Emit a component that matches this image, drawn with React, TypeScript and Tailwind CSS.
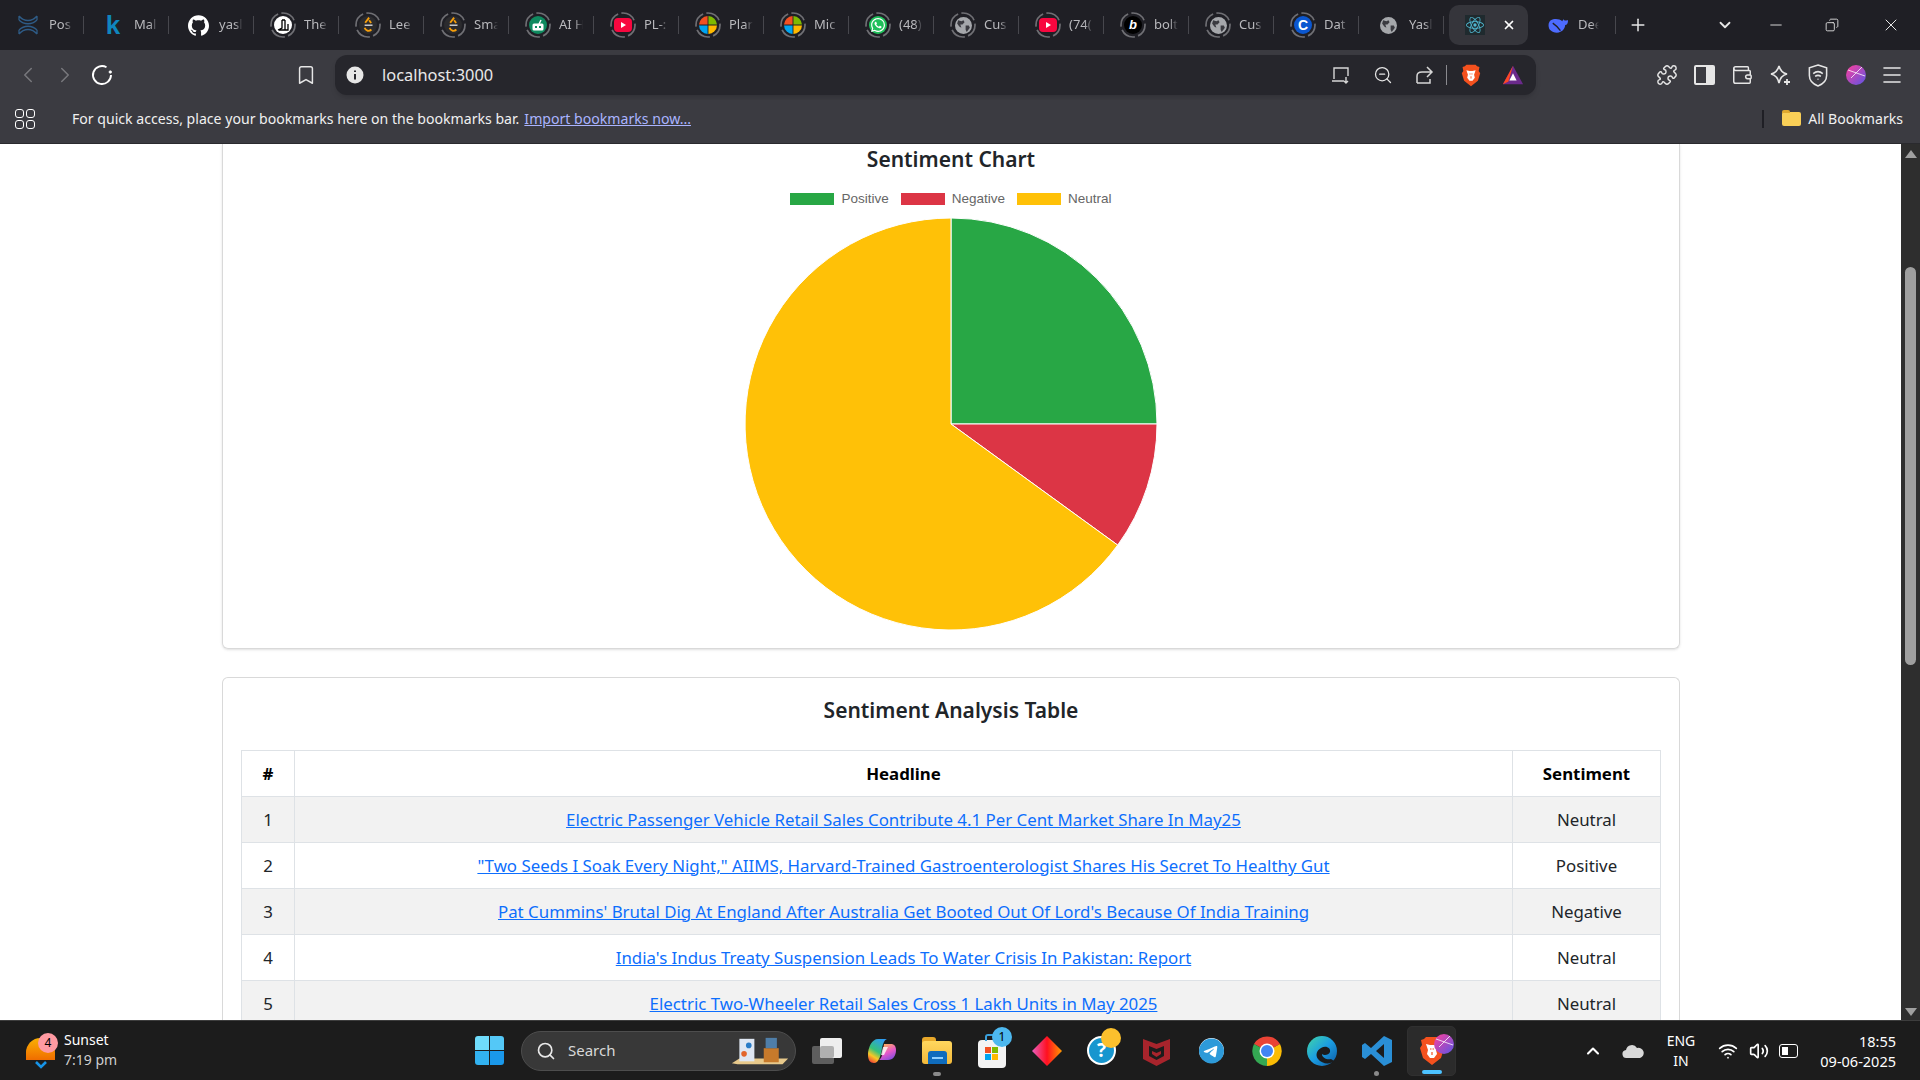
import React from 'react';
import { ChevronDown, ChevronLeft, ChevronRight, Menu, Minus, Plus, Search, X, Bookmark, ZoomOut, Puzzle, Wallet, Wifi, Volume2, ChevronUp, Copy } from 'lucide-react';
import { SiGithub, SiWhatsapp, SiReact, SiTelegram } from 'react-icons/si';

const font = "font-['Noto_Sans',sans-serif]";

const headlines = [
  { id: 1, title: 'Electric Passenger Vehicle Retail Sales Contribute 4.1 Per Cent Market Share In May25', sentiment: 'Neutral' },
  { id: 2, title: '"Two Seeds I Soak Every Night," AIIMS, Harvard-Trained Gastroenterologist Shares His Secret To Healthy Gut', sentiment: 'Positive' },
  { id: 3, title: "Pat Cummins' Brutal Dig At England After Australia Get Booted Out Of Lord's Because Of India Training", sentiment: 'Negative' },
  { id: 4, title: "India's Indus Treaty Suspension Leads To Water Crisis In Pakistan: Report", sentiment: 'Neutral' },
  { id: 5, title: 'Electric Two-Wheeler Retail Sales Cross 1 Lakh Units in May 2025', sentiment: 'Neutral' },
];

// dashed ring that Brave draws round tabs in a group
function Ring({ children }: { children: React.ReactNode }) {
  return (
    <div className="relative flex h-[26px] w-[26px] items-center justify-center">
      <svg viewBox="0 0 26 26" className="absolute inset-0 h-full w-full">
        <circle cx="13" cy="13" r="12" fill="none" stroke="#6f6f74" strokeWidth="1.7" strokeDasharray="15.5 3.35" strokeDashoffset="2" />
      </svg>
      {children}
    </div>
  );
}

const Globe = () => (
  <svg viewBox="0 0 16 16" className="h-[17px] w-[17px]">
    <circle cx="8" cy="8" r="8" fill="#a5a7ab" />
    <path d="M3 3l3 1 2-1 1 2-2 2-2 0 1 3-2-1-2-3zM10 8l3 0 1 2-3 4-1-2z" fill="#3a3a40" />
  </svg>
);

const MsCircle = () => (
  <svg viewBox="0 0 16 16" className="h-[18px] w-[18px]">
    <path d="M7.6 7.6V0A8 8 0 0 0 0 7.6z" fill="#f25022" />
    <path d="M8.4 7.6H16A8 8 0 0 0 8.4 0z" fill="#7fba00" />
    <path d="M7.6 8.4H0A8 8 0 0 0 7.6 16z" fill="#00a4ef" />
    <path d="M8.4 8.4V16A8 8 0 0 0 16 8.4z" fill="#ffb900" />
  </svg>
);

const Yt = () => (
  <div className="flex h-[14px] w-[18px] items-center justify-center rounded-[4px] bg-[#f8073f]">
    <div className="h-0 w-0 border-y-[3px] border-l-[5px] border-y-transparent border-l-white" />
  </div>
);

const Dial = () => (
  <svg viewBox="0 0 16 16" className="h-[18px] w-[18px]">
    <circle cx="8" cy="8" r="8" fill="#2b2b2e" />
    <path d="M9 1.5L5.5 6M10.8 6.2L9 3.8" fill="none" stroke="#f59e0b" strokeWidth="1.7" />
    <path d="M5 10.5c1 3 4 3.5 6 1.5" fill="none" stroke="#f59e0b" strokeWidth="1.7" />
    <path d="M5 8.2h7" stroke="#d0d0d0" strokeWidth="1.3" />
  </svg>
);

const Avatar = ({ className }: { className: string }) => (
  <svg viewBox="0 0 20 20" className={className}>
    <defs>
      <linearGradient id="avatarGrad" x1="0" y1="0" x2="1" y2="1">
        <stop offset="0" stopColor="#ff3f9b" />
        <stop offset="1" stopColor="#5a55e6" />
      </linearGradient>
    </defs>
    <circle cx="10" cy="10" r="10" fill="url(#avatarGrad)" />
    <path d="M2 5l17 6M16 2L5 13" stroke="#fff" strokeWidth="0.9" opacity="0.85" />
  </svg>
);

const BraveLion = ({ className }: { className: string }) => (
  <svg viewBox="0 0 24 30" className={className}>
    <path d="M6 1h12l2 2 3 1-1 5 2 3-3 10-9 7-9-7-3-10 2-3-1-5 3-1z" fill="#f4511e" />
    <path d="M6 8l4 1h4l4-1-2 6 1 4-3 4h-4l-3-4 1-4z" fill="#fff" />
    <path d="M10 13h1.5M12.5 13H14M12 16v3" stroke="#f4511e" strokeWidth="1.2" />
  </svg>
);

const tabs: { label: string; icon: React.ReactNode }[] = [
  {
    label: 'Pos',
    icon: (
      <svg viewBox="0 0 20 20" className="h-[20px] w-[20px]" fill="none" stroke="#2e5b86" strokeWidth="1.3">
        <path d="M1 1c5 6 13 6 18 0M1 19c5-6 13-6 18 0M1 5c5 5 13 5 18 0M1 15c5-5 13-5 18 0M1 1v4M19 1v4M1 15v4M19 15v4" />
      </svg>
    ),
  },
  { label: 'Mal', icon: <span className="font-['Liberation_Sans',sans-serif] text-[26px] leading-none font-bold text-[#0f86bd]">k</span> },
  { label: 'yasl', icon: <SiGithub className="h-[21px] w-[21px] text-white" /> },
  {
    label: 'The',
    icon: (
      <Ring>
        <div className="flex h-[18px] w-[18px] items-center justify-center rounded-full bg-white">
          <svg viewBox="0 0 12 12" className="h-[12px] w-[12px]" fill="none" stroke="#000" strokeWidth="1.3">
            <path d="M5 1v8L1 11M8 1v10M5 1h3M11 5v6H2" />
          </svg>
        </div>
      </Ring>
    ),
  },
  { label: 'Lee', icon: <Ring><Dial /></Ring> },
  { label: 'Sma', icon: <Ring><Dial /></Ring> },
  {
    label: 'AI H',
    icon: (
      <Ring>
        <svg viewBox="0 0 18 18" className="h-[18px] w-[18px]">
          <circle cx="9" cy="9" r="9" fill="#0f8a5f" />
          <path d="M10 8l2-4" stroke="#fff" strokeWidth="1.4" />
          <rect x="3.5" y="7.5" width="11" height="7" rx="1.5" fill="#fff" />
          <rect x="6" y="10" width="2" height="2" fill="#0f8a5f" />
          <rect x="10" y="10" width="2" height="2" fill="#0f8a5f" />
        </svg>
      </Ring>
    ),
  },
  { label: 'PL-:', icon: <Ring><Yt /></Ring> },
  { label: 'Plar', icon: <Ring><MsCircle /></Ring> },
  { label: 'Mic', icon: <Ring><MsCircle /></Ring> },
  {
    label: '(48)',
    icon: (
      <Ring>
        <div className="flex h-[18px] w-[18px] items-center justify-center rounded-full bg-[#1fc05a]">
          <SiWhatsapp className="h-[14px] w-[14px] text-white" />
        </div>
      </Ring>
    ),
  },
  { label: 'Cus', icon: <Ring><Globe /></Ring> },
  { label: '(74(', icon: <Ring><Yt /></Ring> },
  {
    label: 'bolt',
    icon: (
      <Ring>
        <div className="flex h-[18px] w-[18px] items-center justify-center rounded-full bg-black font-['Liberation_Sans',sans-serif] text-[13px] font-bold text-white italic">b</div>
      </Ring>
    ),
  },
  { label: 'Cus', icon: <Ring><Globe /></Ring> },
  {
    label: 'Dat',
    icon: (
      <Ring>
        <div className="flex h-[18px] w-[18px] items-center justify-center rounded-full bg-[#0b57d0] font-['Liberation_Sans',sans-serif] text-[14px] font-bold text-white">C</div>
      </Ring>
    ),
  },
  { label: 'Yasl', icon: <Globe /> },
];

function Tab({ label, icon }: { label: string; icon: React.ReactNode }) {
  return (
    <div className="flex h-[40px] w-[85px] shrink-0 items-center pl-[15px]">
      <div className="flex w-[26px] shrink-0 items-center justify-center">{icon}</div>
      <span className="ml-[8px] w-[24px] overflow-hidden text-[13px] whitespace-nowrap text-[#b9b9bd] [mask-image:linear-gradient(to_right,black_65%,transparent)]">{label}</span>
      <div className="ml-[10px] h-[18px] w-px bg-[#47474d]" />
    </div>
  );
}

function Toolbar() {
  return (
    <div className="flex h-[50px] items-center bg-[#3b3b41] text-[#e6e6e6]">
      <ChevronLeft className="ml-[15px] h-[26px] w-[26px] text-[#77777c]" strokeWidth={1.4} />
      <ChevronRight className="ml-[11px] h-[26px] w-[26px] text-[#77777c]" strokeWidth={1.4} />
      <svg viewBox="0 0 22 22" className="ml-[13px] h-[22px] w-[22px]" fill="none" stroke="#fff" strokeWidth="1.9">
        <path d="M15.5 3.2A9 9 0 1 0 20 11" />
        <circle cx="19.3" cy="8" r="1.3" fill="#fff" strokeWidth="0.6" />
      </svg>
      <Bookmark className="ml-[182px] h-[22px] w-[22px]" strokeWidth={1.6} />
      <div className="ml-[18px] flex h-[40px] w-[1201px] items-center rounded-[12px] bg-[#26262c] shadow-md">
        <svg viewBox="0 0 18 18" className="ml-[11px] h-[18px] w-[18px]">
          <circle cx="9" cy="9" r="8.5" fill="#e6e6e6" />
          <path d="M9 8v5.5M9 4.5v1.6" stroke="#26262c" strokeWidth="2" />
        </svg>
        <span className={`ml-[18px] text-[16.4px] text-[#e8e8e8] ${font}`}>localhost:3000</span>
        <div className="flex-1" />
        <svg viewBox="0 0 20 20" className="h-[20px] w-[20px]" fill="none" stroke="#d6d6d6" strokeWidth="1.4">
          <path d="M3 14V3h14v8M1 16h12M15 12v6m-2-2l2 2 2-2" />
        </svg>
        <ZoomOut className="ml-[22px] h-[20px] w-[20px]" strokeWidth={1.5} />
        <svg viewBox="0 0 20 20" className="ml-[22px] h-[20px] w-[20px]" fill="none" stroke="#d6d6d6" strokeWidth="1.5">
          <path d="M2 18V11c0-3 2-4 5-4h9M12 2l5 5-5 5M2 18h13v-4" />
        </svg>
        <div className="ml-[11px] h-[20px] w-px bg-[#8a8a8f]" />
        <BraveLion className="ml-[14px] h-[23px] w-[20px]" />
        <svg viewBox="0 0 24 24" className="mr-[12px] ml-[21px] h-[22px] w-[22px]">
          <path d="M12 2L1 22h22z" fill="#6b2a8c" />
          <path d="M12 2L1 22l6-3z" fill="#ff4724" />
          <path d="M12 10l-4 8h8z" fill="#fff" />
        </svg>
      </div>
      <Puzzle className="ml-[120px] h-[22px] w-[22px]" strokeWidth={1.6} />
      <div className="ml-[16px] flex h-[20px] w-[21px] overflow-hidden rounded-[2px] border-2 border-[#e6e6e6]">
        <div className="flex-1" />
        <div className="w-[7px] bg-[#e6e6e6]" />
      </div>
      <Wallet className="ml-[16px] h-[22px] w-[22px]" strokeWidth={1.6} />
      <svg viewBox="0 0 22 22" className="ml-[16px] h-[22px] w-[22px]" fill="none" stroke="#e6e6e6" strokeWidth="1.6">
        <path d="M10 2c1 4 4 7 8 8-4 1-7 4-8 9-1-5-4-8-8-9 4-1 7-4 8-8z" />
        <path d="M18 15v6M15 18h6" strokeWidth="1.8" />
      </svg>
      <svg viewBox="0 0 22 24" className="ml-[16px] h-[23px] w-[22px]" fill="none" stroke="#e6e6e6" strokeWidth="1.6">
        <path d="M11 1l9 3v8c0 5-4 9-9 11-5-2-9-6-9-11V4z" />
        <path d="M6 10c3-2.5 7-2.5 10 0M8 13c2-1.5 4-1.5 6 0M10.5 16h1" />
      </svg>
      <Avatar className="ml-[17px] h-[20px] w-[20px]" />
      <Menu className="ml-[14px] h-[24px] w-[24px]" strokeWidth={1.6} />
    </div>
  );
}

function BookmarksBar() {
  return (
    <div className={`flex h-[43px] items-center bg-[#3b3b41] pb-[5px] text-[14.1px] text-[#f0f0f0] ${font}`}>
      <div className="ml-[15px] grid h-[20px] w-[20px] grid-cols-2 gap-[2px]">
        <div className="rounded-[3px] border-[1.5px] border-white" />
        <div className="rounded-[3px] border-[1.5px] border-white" />
        <div className="rounded-[3px] border-[1.5px] border-white" />
        <div className="rounded-[3px] border-[1.5px] border-white" />
      </div>
      <span className="ml-[37px]">For quick access, place your bookmarks here on the bookmarks bar.</span>
      <span className="ml-[5px] text-[#aab4ff] underline">Import bookmarks now...</span>
      <div className="flex-1" />
      <div className="h-[18px] w-[2px] bg-[#1f1f25]" />
      <div className="relative ml-[18px] h-[14px] w-[19px] rounded-[2px] bg-[#f9cf57]">
        <div className="absolute -top-[2px] left-0 h-[3px] w-[8px] rounded-t-[2px] bg-[#e0a92e]" />
      </div>
      <span className="mr-[17px] ml-[7px]">All Bookmarks</span>
    </div>
  );
}

function Legend({ color, label }: { color: string; label: string }) {
  return (
    <div className="flex items-center gap-[7px]">
      <div className="h-[12px] w-[44px]" style={{ backgroundColor: color }} />
      <span className="font-['Liberation_Sans',sans-serif] text-[13.5px] text-[#666666]">{label}</span>
    </div>
  );
}

function ChartCard() {
  return (
    <div className="flex h-[505px] w-[1458px] shrink-0 flex-col items-center rounded-b-[6px] border border-t-0 border-[#d9d9d9] shadow-sm">
      <h4 className={`mt-[1px] text-[21px] leading-[28px] font-semibold text-[#212529] ${font}`}>Sentiment Chart</h4>
      <div className="mt-[19px] flex h-[14px] items-center gap-[12px]">
        <Legend color="#28a745" label="Positive" />
        <Legend color="#dc3545" label="Negative" />
        <Legend color="#ffc107" label="Neutral" />
      </div>
      <svg viewBox="0 0 414 414" className="mt-[11px] h-[414px] w-[414px]">
        <path d="M207 207V1A206 206 0 0 1 413 207z" fill="#28a745" stroke="#fff" />
        <path d="M207 207H413A206 206 0 0 1 373.7 328.1z" fill="#dc3545" stroke="#fff" />
        <path d="M207 207L373.7 328.1A206 206 0 1 1 207 1z" fill="#ffc107" stroke="#fff" />
      </svg>
    </div>
  );
}

function TableCard() {
  return (
    <div className="mt-[28px] w-[1458px] rounded-t-[6px] border border-b-0 border-[#d9d9d9] px-[18px]">
      <h4 className={`mt-[17px] mb-[24px] text-center text-[21px] leading-[31px] font-semibold text-[#212529] ${font}`}>Sentiment Analysis Table</h4>
      <table className={`w-[1420px] table-fixed border-collapse text-center text-[16.85px] text-[#212529] ${font}`}>
        <thead>
          <tr className="h-[46px] text-black">
            <th className="w-[53px] border border-[#dee2e6] font-bold">#</th>
            <th className="border border-[#dee2e6] font-bold">Headline</th>
            <th className="w-[148px] border border-[#dee2e6] font-bold">Sentiment</th>
          </tr>
        </thead>
        <tbody>
          {headlines.map((item) => (
            <tr key={item.id} className={item.id % 2 === 1 ? 'h-[46px] bg-[#f2f2f2]' : 'h-[46px]'}>
              <td className="border border-[#dee2e6]">{item.id}</td>
              <td className="border border-[#dee2e6]">
                <a className="text-[#0d6efd] underline">{item.title}</a>
              </td>
              <td className="border border-[#dee2e6]">{item.sentiment}</td>
            </tr>
          ))}
        </tbody>
      </table>
    </div>
  );
}

function Scrollbar() {
  return (
    <div className="flex w-[19px] shrink-0 flex-col items-center bg-[#2e2e2e]">
      <div className="mt-[6px] h-0 w-0 border-x-[6px] border-b-[8px] border-x-transparent border-b-[#a0a0a0]" />
      <div className="mt-[109px] h-[398px] w-[11px] rounded-full bg-[#9f9f9f]" />
      <div className="flex-1" />
      <div className="mb-[4px] h-0 w-0 border-x-[6px] border-t-[8px] border-x-transparent border-t-[#a0a0a0]" />
    </div>
  );
}

const Slot = ({ children, className = '' }: { children: React.ReactNode; className?: string }) => (
  <div className={`relative flex h-[50px] w-[55px] shrink-0 items-center justify-center ${className}`}>{children}</div>
);

function Taskbar() {
  return (
    <div className={`flex h-[60px] shrink-0 items-center border-t border-[#3d3d3d] bg-[#1c1c1c] text-white ${font}`}>
      <div className="relative ml-[26px] h-[32px] w-[30px]">
        <div className="absolute top-[3px] left-0 h-[22px] w-[29px] rounded-t-[15px] bg-gradient-to-b from-[#f9b002] to-[#ef6c00]" />
        <svg viewBox="0 0 12 8" className="absolute top-[26px] left-[9px] h-[8px] w-[12px]">
          <path d="M1 1l5 5 5-5" fill="none" stroke="#1793e6" strokeWidth="2.6" />
        </svg>
        <div className="absolute -top-[2px] left-[12px] flex h-[20px] w-[20px] items-center justify-center rounded-full bg-[#ff9aa2] text-[12px] text-black">4</div>
      </div>
      <div className="mb-[2px] ml-[8px] flex w-[80px] flex-col text-[14px] leading-[20px]">
        <span>Sunset</span>
        <span className="text-[#cfcfcf]">7:19 pm</span>
      </div>
      <svg viewBox="0 0 29 29" className="ml-[331px] h-[29px] w-[29px]">
        <path d="M0 3a3 3 0 0 1 3-3h11v14H0z" fill="#6fdcfb" />
        <path d="M15 0h11a3 3 0 0 1 3 3v11H15z" fill="#54c8f7" />
        <path d="M0 15h14v14H3a3 3 0 0 1-3-3z" fill="#32b2f0" />
        <path d="M15 15h14v11a3 3 0 0 1-3 3H15z" fill="#1a98ea" />
      </svg>
      <div className="ml-[17px] flex h-[40px] w-[275px] items-center overflow-hidden rounded-full border border-[#4d4d4d] bg-[#383838]">
        <Search className="ml-[14px] h-[20px] w-[20px] text-[#e8e8e8]" strokeWidth={2} />
        <span className="ml-[12px] text-[15px] text-[#d8d8d8]">Search</span>
        <div className="flex-1" />
        <svg viewBox="0 0 64 32" className="mr-[5px] h-[32px] w-[60px]">
          <path d="M2 29l8-5h46l6 0-6 6H8z" fill="#e8c98b" />
          <rect x="10" y="3" width="16" height="24" fill="#dfe7f3" />
          <rect x="36" y="13" width="16" height="15" fill="#c77a2b" />
          <rect x="38" y="2" width="12" height="11" fill="#4f7ea8" />
          <circle cx="20" cy="10" r="3" fill="#2a7cc7" />
          <circle cx="15" cy="19" r="3" fill="#e2652c" />
        </svg>
      </div>
      <Slot className="ml-[3px]">
        <div className="relative h-[26px] w-[30px]">
          <div className="absolute top-[8px] left-0 h-[18px] w-[22px] rounded-[2px] bg-[#5e5e5e]" />
          <div className="absolute top-0 left-[8px] h-[20px] w-[22px] rounded-[2px] bg-[#eeeeee]" />
          <div className="absolute top-[8px] left-[8px] h-[12px] w-[14px] rounded-[2px] bg-[#b0b0b0]" />
        </div>
      </Slot>
      <Slot>
        <svg viewBox="0 0 28 26" className="h-[26px] w-[28px]">
          <defs>
            <linearGradient id="copLeft" x1="0.7" y1="0" x2="0.2" y2="1">
              <stop offset="0" stopColor="#2d9cf0" />
              <stop offset="0.5" stopColor="#35c27a" />
              <stop offset="0.75" stopColor="#f9c825" />
              <stop offset="1" stopColor="#ef4136" />
            </linearGradient>
            <linearGradient id="copRight" x1="0.3" y1="0" x2="0.8" y2="1">
              <stop offset="0" stopColor="#ffb35c" />
              <stop offset="0.5" stopColor="#e858c8" />
              <stop offset="1" stopColor="#7a4de0" />
            </linearGradient>
          </defs>
          <path d="M16 6h7c3 0 5 2 5 6 0 6-3 10-8 10h-9c3-2 3-5 4-9z" fill="url(#copRight)" />
          <path d="M10 1h9c-3 1-4 5-5 9-1 7-3 15-8 15-4 0-6-3-6-8C0 9 4 1 10 1z" fill="url(#copLeft)" />
          <path d="M15 9h5l-4 8h-3z" fill="#fff" opacity="0.8" />
        </svg>
      </Slot>
      <Slot>
        <div className="relative h-[27px] w-[30px]">
          <div className="absolute top-0 left-0 h-[8px] w-[14px] rounded-t-[3px] bg-[#e8a82a]" />
          <div className="absolute top-[4px] left-0 h-[23px] w-[30px] rounded-[3px] bg-gradient-to-b from-[#ffd75e] to-[#f3b93a]" />
          <div className="absolute bottom-0 left-[6px] h-[13px] w-[19px] rounded-t-[3px] bg-[#0f6cbd]" />
          <div className="absolute bottom-[5px] left-[10px] h-[2px] w-[11px] bg-[#8fd0ff]" />
        </div>
        <div className="absolute bottom-0 h-[4px] w-[8px] rounded-full bg-[#8a8a8a]" />
      </Slot>
      <Slot>
        <div className="relative mt-[6px] flex h-[28px] w-[28px] items-center justify-center rounded-[4px] bg-[#f3f3f3]">
          <div className="absolute -top-[6px] left-[7px] h-[7px] w-[14px] rounded-t-[3px] border-[2px] border-b-0 border-[#3aa0dc]" />
          <div className="grid w-[13px] grid-cols-2 gap-[1px]">
            <div className="h-[6px] bg-[#f25022]" />
            <div className="h-[6px] bg-[#7fba00]" />
            <div className="h-[6px] bg-[#00a4ef]" />
            <div className="h-[6px] bg-[#ffb900]" />
          </div>
        </div>
        <div className="absolute top-[1px] left-[28px] flex h-[20px] w-[20px] items-center justify-center rounded-full bg-[#4db8ef] text-[12px] text-black">1</div>
      </Slot>
      <Slot>
        <svg viewBox="0 0 30 30" className="h-[30px] w-[30px]">
          <defs>
            <linearGradient id="dia" x1="0" y1="0" x2="1" y2="0">
              <stop offset="0" stopColor="#e95fc0" />
              <stop offset="0.5" stopColor="#ff1020" />
              <stop offset="1" stopColor="#ff9a00" />
            </linearGradient>
          </defs>
          <path d="M15 0l15 15-15 15L0 15z" fill="url(#dia)" />
        </svg>
      </Slot>
      <Slot>
        <div className="flex h-[29px] w-[29px] items-center justify-center rounded-full border-[2px] border-white bg-[#1796cf] text-[19px] font-bold text-white">?</div>
        <div className="absolute top-[2px] left-[27px] h-[20px] w-[20px] rounded-full bg-[#fbc02d]" />
      </Slot>
      <Slot>
        <svg viewBox="0 0 27 30" className="h-[30px] w-[27px]">
          <path d="M0 3l13.5 5L27 3v20l-13.5 7L0 23z" fill="#a8242c" />
          <path d="M6 10l7.5 3 7.5-3v10l-7.5 4L6 20z" fill="#1c1c1c" />
          <path d="M9 15l4.5 2 4.5-2v3l-4.5 3L9 18z" fill="#a8242c" />
        </svg>
      </Slot>
      <Slot>
        <div className="flex h-[25px] w-[25px] items-center justify-center rounded-full bg-white">
          <SiTelegram className="h-[26px] w-[26px] text-[#2d9ad9]" />
        </div>
      </Slot>
      <Slot>
        <svg viewBox="0 0 30 30" className="h-[30px] w-[30px]">
          <path d="M15 15L2 8A15 15 0 0 1 28 8z" fill="#ea4335" />
          <path d="M15 15L28 8A15 15 0 0 1 15 30z" fill="#fbbc05" />
          <path d="M15 15L15 30A15 15 0 0 1 2 8z" fill="#34a853" />
          <circle cx="15" cy="15" r="7.5" fill="#fff" />
          <circle cx="15" cy="15" r="6" fill="#4285f4" />
        </svg>
      </Slot>
      <Slot>
        <svg viewBox="0 0 30 30" className="h-[30px] w-[30px]">
          <defs>
            <linearGradient id="edge" x1="0" y1="0" x2="1" y2="1">
              <stop offset="0" stopColor="#41d6a8" />
              <stop offset="0.5" stopColor="#1b9de2" />
              <stop offset="1" stopColor="#0c59a4" />
            </linearGradient>
          </defs>
          <circle cx="15" cy="15" r="15" fill="url(#edge)" />
          <path d="M14 12c5-3 10 0 9 4-1 3-6 4-8 2 0 4 5 6 9 5l3 2c-4 4-12 3-16-2-3-4-1-9 3-11z" fill="#1c1c1c" />
        </svg>
      </Slot>
      <Slot>
        <svg viewBox="0 0 30 30" className="h-[30px] w-[30px]">
          <path d="M22 0l8 4v22l-8 4L9 18l-6 5-3-2v-12l3-2 6 5zM22 8l-8 7 8 7z" fill="#2a8fd6" />
        </svg>
        <div className="absolute bottom-0 h-[5px] w-[5px] rounded-full bg-[#8a8a8a]" />
      </Slot>
      <Slot>
        <div className="relative flex h-[50px] w-[49px] items-center justify-center rounded-[5px] border border-[#303030] bg-[#2b2b2b]">
          <BraveLion className="h-[30px] w-[24px]" />
          <Avatar className="absolute top-[7px] left-[26px] h-[20px] w-[20px]" />
          <div className="absolute bottom-[1px] h-[4px] w-[20px] rounded-full bg-[#4cc2ff]" />
        </div>
      </Slot>
      <ChevronUp className="ml-[124px] h-[20px] w-[20px]" strokeWidth={2.5} />
      <svg viewBox="0 0 22 16" className="ml-[19px] h-[16px] w-[22px]">
        <path d="M5 15a4 4 0 0 1-1-8 6 6 0 0 1 11-2 5 5 0 0 1 3 10z" fill="#d8d8d8" />
      </svg>
      <div className="ml-[19px] flex w-[36px] flex-col items-center text-[14px] leading-[20px]">
        <span>ENG</span>
        <span>IN</span>
      </div>
      <Wifi className="ml-[19px] h-[20px] w-[20px]" />
      <Volume2 className="ml-[11px] h-[20px] w-[20px]" />
      <div className="ml-[10px] flex h-[14px] w-[19px] items-center rounded-[3px] border-[1.5px] border-white p-[2px]">
        <div className="h-full w-[6px] bg-white" />
      </div>
      <div className="mr-[24px] ml-auto flex flex-col items-end text-[14.5px] leading-[20px]">
        <span>18:55</span>
        <span>09-06-2025</span>
      </div>
    </div>
  );
}

export default function App() {
  return (
    <div className={`flex h-screen w-screen flex-col overflow-hidden bg-white ${font}`}>
      <div className="flex h-[50px] shrink-0 items-center bg-[#1f1f25]">
        {tabs.map((tab, i) => (
          <Tab key={i} label={tab.label} icon={tab.icon} />
        ))}
        <div className="ml-[4px] flex h-[40px] w-[79px] shrink-0 items-center rounded-[10px] bg-[#35353b] pl-[16px]">
          <div className="flex h-[20px] w-[20px] items-center justify-center bg-[#1f2a2e]">
            <SiReact className="h-[18px] w-[18px] text-[#4fb6cf]" />
          </div>
          <X className="ml-[17px] h-[14px] w-[14px] text-white" strokeWidth={3} />
        </div>
        <div className="flex w-[88px] items-center pl-[20px]">
          <svg viewBox="0 0 22 18" className="h-[18px] w-[21px] shrink-0">
            <path d="M20 4c-2 1-3 0-4-1l-1 2C12 2 6 2 3 4 0 6 0 11 2 14c3 3 8 4 11 2 3-1 5-4 5-7 2 0 3-2 3-5z" fill="#4d6bfe" />
            <path d="M5 7c3 2 6 5 8 8" stroke="#1f1f25" strokeWidth="1.4" fill="none" />
          </svg>
          <span className="ml-[9px] w-[22px] overflow-hidden text-[13px] whitespace-nowrap text-[#b9b9bd] [mask-image:linear-gradient(to_right,black_65%,transparent)]">Dee</span>
          <div className="ml-[16px] h-[18px] w-px bg-[#47474d]" />
        </div>
        <Plus className="ml-[12px] h-[20px] w-[20px] text-[#e6e6e6]" strokeWidth={1.8} />
        <ChevronDown className="ml-[68px] h-[18px] w-[18px] text-[#e6e6e6]" strokeWidth={2.4} />
        <Minus className="ml-[33px] h-[18px] w-[18px] text-[#e6e6e6]" strokeWidth={1.2} />
        <Copy className="ml-[40px] h-[14px] w-[14px] -scale-x-100 text-[#e6e6e6]" strokeWidth={1.5} />
        <X className="ml-[42px] h-[20px] w-[20px] text-[#e6e6e6]" strokeWidth={1.2} />
      </div>
      <Toolbar />
      <BookmarksBar />
      <div className="flex min-h-0 flex-1 border-t border-[#2a2a2e]">
        <div className="flex min-w-0 flex-1 flex-col overflow-hidden pl-[222px]">
          <ChartCard />
          <TableCard />
        </div>
        <Scrollbar />
      </div>
      <Taskbar />
    </div>
  );
}
